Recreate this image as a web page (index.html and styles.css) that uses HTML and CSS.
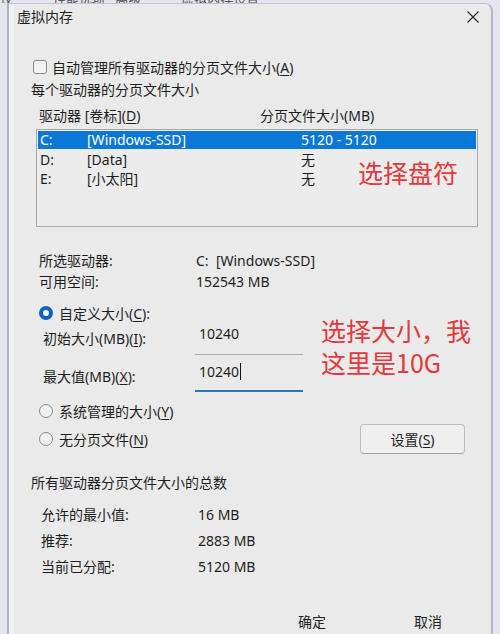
FILE: index.html
```html
<!DOCTYPE html>
<html lang="zh-CN">
<head>
    <meta charset="UTF-8">
    <meta name="viewport" content="width=device-width, initial-scale=1.0">
    <title>虚拟内存</title>
    <link rel="stylesheet" href="styles.css">
</head>
<body>
    <!-- 后面窗口露出来的一点文字 -->
    <div class="behind"><span>议</span><span>性能选项 &nbsp; 高级</span><span>虚拟内存设置</span></div>

    <div class="dialog">
        <div class="titlebar">
            <span class="title">虚拟内存</span>
            <svg class="close" width="14" height="14" viewBox="0 0 14 14">
                <path d="M1.5 1.5 L12.5 12.5 M12.5 1.5 L1.5 12.5" stroke="#2b2b2b" stroke-width="1.2" fill="none"/>
            </svg>
        </div>

        <label class="check-row"><span class="checkbox"></span><span>自动管理所有驱动器的分页文件大小(<u>A</u>)</span></label>
        <div class="group-title">每个驱动器的分页文件大小</div>

        <div class="list-head">
            <span>驱动器 [卷标](<u>D</u>)</span>
            <span>分页文件大小(MB)</span>
        </div>
        <div class="listbox">
            <div class="drive selected"><span>C:</span><span>[Windows-SSD]</span><span>5120 - 5120</span></div>
            <div class="drive"><span>D:</span><span>[Data]</span><span>无</span></div>
            <div class="drive"><span>E:</span><span>[小太阳]</span><span>无</span></div>
        </div>

        <div class="info">
            <span>所选驱动器:</span><span>C:&nbsp; [Windows-SSD]</span>
            <span>可用空间:</span><span>152543 MB</span>
        </div>

        <label class="radio-row"><span class="radio checked"></span><span>自定义大小(<u>C</u>):</span></label>
        <div class="field first">
            <span class="field-label">初始大小(MB)(<u>I</u>):</span>
            <span class="input">10240</span>
        </div>
        <div class="field focus">
            <span class="field-label">最大值(MB)(<u>X</u>):</span>
            <span class="input">10240<span class="caret"></span></span>
        </div>

        <label class="radio-row system"><span class="radio"></span><span>系统管理的大小(<u>Y</u>)</span></label>
        <div class="radio-row none">
            <label class="radio-label"><span class="radio"></span><span>无分页文件(<u>N</u>)</span></label>
            <button class="btn set">设置(<u>S</u>)</button>
        </div>

        <div class="group-title total">所有驱动器分页文件大小的总数</div>
        <div class="totals">
            <span>允许的最小值:</span><span>16 MB</span>
            <span>推荐:</span><span>2883 MB</span>
            <span>当前已分配:</span><span>5120 MB</span>
        </div>

        <div class="footer">
            <button class="btn plain">确定</button>
            <button class="btn plain">取消</button>
        </div>

        <!-- 截图上的红字标注 -->
        <div class="note note-drive">选择盘符</div>
        <div class="note note-size">选择大小，我<br>这里是10G</div>
    </div>
</body>
</html>
```

FILE: styles.css
```css
html, body{
    margin: 0;
    padding: 0;
    height: 100%;
}
body{
    overflow: hidden;
    font-family: "Noto Sans", "Noto Sans CJK SC", sans-serif;
    font-size: 14px;
    color: #1e1e1e;
    background: #e4e5ee;
}
u{
    text-underline-offset: 2px;
    text-decoration-thickness: 1px;
}

/* 后面窗口 */
.behind{
    height: 3px;
    overflow: hidden;
    display: flex;
    gap: 40px;
    font-size: 13px;
    line-height: 10px;
    color: #555;
    white-space: nowrap;
}
.behind span{
    margin-top: -6px;
}

/* 对话框 */
.dialog{
    position: relative;
    margin-left: 7px;
    width: 482px;
    height: 660px;
    background: #eaeaea;
    border-left: 2px solid #b3b2c4;
    border-right: 2px solid #b8b6cc;
    border-top: 1px solid #c4c3d4;
    border-top-right-radius: 8px;
    box-shadow: inset 5px 0 0 #eef0f2;
}
.titlebar{
    height: 26px;
    display: flex;
    align-items: center;
    justify-content: space-between;
    padding: 0 11px 0 8px;
}
.title{
    line-height: 20px;
}
.close{
    display: block;
}

.check-row{
    display: flex;
    align-items: center;
    height: 20px;
    margin-top: 27px;
    padding-left: 24px;
    gap: 5px;
}
.checkbox{
    width: 12px;
    height: 12px;
    border: 1px solid #8a8a8a;
    border-radius: 3px;
    background: #f2f2f2;
}
.group-title{
    line-height: 20px;
    margin-top: 3px;
    padding-left: 22px;
}

/* 驱动器列表 */
.list-head{
    display: grid;
    grid-template-columns: 221px 1fr;
    line-height: 20px;
    margin-top: 6px;
    padding-left: 30px;
}
.listbox{
    margin: 3px 0 0 27px;
    width: 438px;
    height: 94px;
    padding: 1px;
    border: 1px solid #a9a9a9;
    background: #ececec;
}
.drive{
    display: grid;
    grid-template-columns: 47px 214px 1fr;
    height: 19px;
    line-height: 19px;
    padding-left: 2px;
}
.drive.selected{
    height: 18px;
    line-height: 18px;
    margin-bottom: 1px;
    background: #0a78d6;
    color: #fff;
}

.info, .totals{
    display: grid;
    grid-template-columns: 157px 1fr;
    padding-left: 30px;
    line-height: 21px;
}
.info{
    margin-top: 23px;
}

/* 单选 */
.radio-row{
    display: flex;
    align-items: center;
    gap: 6px;
    height: 20px;
    margin-top: 11px;
    padding-left: 30px;
}
.radio{
    box-sizing: border-box;
    width: 14px;
    height: 14px;
    border: 1px solid #8a8a8a;
    border-radius: 50%;
    background: #f0f0f0;
}
.radio.checked{
    border: 4px solid #0b63c1;
    background: #fff;
}
.radio-row.system{
    margin-top: 9px;
}
.radio-row.none{
    height: 30px;
    margin-top: 3px;
    padding-right: 26px;
}
.radio-label{
    display: flex;
    align-items: center;
    gap: 6px;
}

/* 输入框 */
.field{
    display: grid;
    grid-template-columns: 152px 108px;
    padding-left: 34px;
}
.field-label{
    line-height: 20px;
}
.input{
    box-sizing: border-box;
    padding-left: 4px;
    line-height: 22px;
}
.field.first .field-label{
    padding-top: 6px;
}
.field.first .input{
    height: 32px;
    border-bottom: 1px solid #ababab;
}
.field.focus .field-label{
    padding-top: 12px;
}
.field.focus .input{
    height: 37px;
    padding-top: 6px;
    border-bottom: 2px solid #2f75bd;
}
.caret{
    display: inline-block;
    width: 1px;
    height: 17px;
    margin-left: 1px;
    vertical-align: -3px;
    background: #111;
}

/* 按钮 */
.btn{
    font: inherit;
    color: inherit;
    cursor: pointer;
}
.btn.set{
    margin-left: auto;
    width: 105px;
    height: 30px;
    border: 1px solid #b7bccb;
    border-bottom-color: #9aa0ae;
    border-radius: 4px;
    background: #efefef;
}
.group-title.total{
    margin-top: 19px;
}
.totals{
    margin-top: 9px;
    padding-left: 32px;
    line-height: 26px;
}
.footer{
    display: flex;
    justify-content: flex-end;
    gap: 12px;
    margin-top: 26px;
    padding-right: 11px;
}
.btn.plain{
    width: 104px;
    height: 30px;
    border: 0;
    background: transparent;
}

/* 红字标注 */
.note{
    position: absolute;
    font-family: "Noto Sans CJK SC", sans-serif;
    font-size: 25px;
    color: #e5373c;
    white-space: nowrap;
}
.note-drive{
    left: 349px;
    top: 153px;
    line-height: 30px;
}
.note-size{
    left: 312px;
    top: 310px;
    line-height: 32px;
}
```
